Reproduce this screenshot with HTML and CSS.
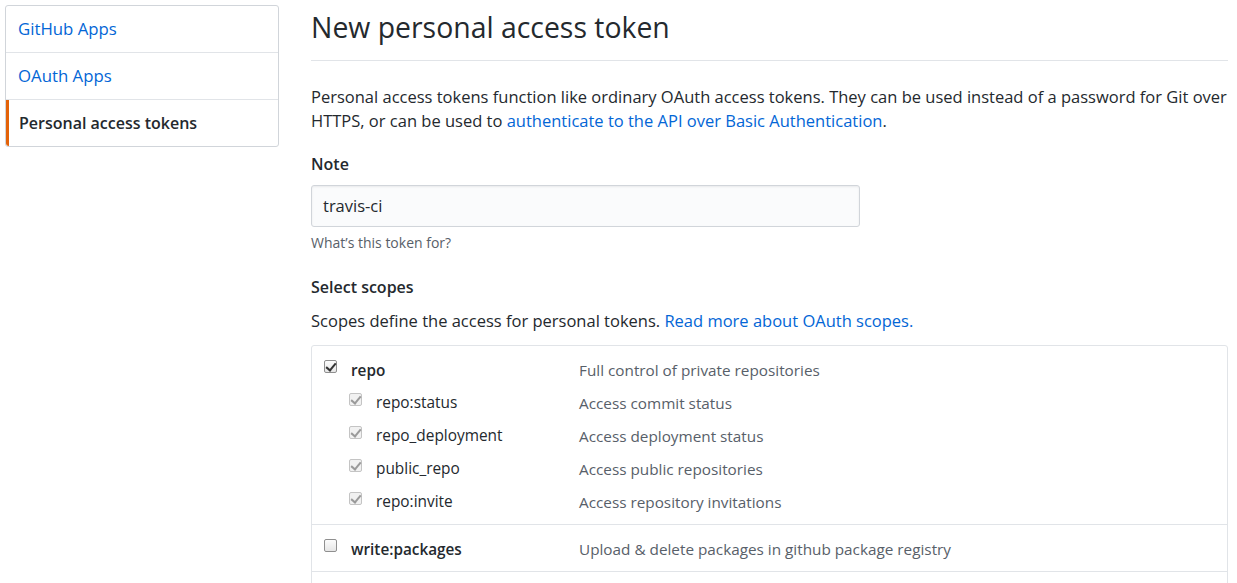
FILE: index.html
```html
<!DOCTYPE html>
<html>
<head>
<meta charset="utf-8">
<link rel="stylesheet" href="styles.css">
</head>
<body>
<div class="page">
  <nav class="menu">
    <a class="menu-item" href="#">GitHub Apps</a>
    <a class="menu-item" href="#">OAuth Apps</a>
    <a class="menu-item selected" href="#">Personal access tokens</a>
  </nav>
  <main class="content">
    <h2 class="title">New personal access token</h2>
    <p class="intro">Personal access tokens function like ordinary OAuth access tokens. They can be used instead of a password for Git over HTTPS, or can be used to <a href="#">authenticate to the API over Basic Authentication</a>.</p>
    <dl class="form-group">
      <dt><label class="label">Note</label></dt>
      <dd><div class="input">travis-ci</div></dd>
      <dd class="note">What’s this token for?</dd>
    </dl>
    <dl class="form-group scopes-group">
      <dt><label class="label">Select scopes</label></dt>
      <dd class="scopes-desc">Scopes define the access for personal tokens. <a href="#">Read more about OAuth scopes.</a></dd>
    </dl>
    <div class="scopes">
      <div class="scope-block">
        <div class="scope-row parent">
          <span class="cell name"><span class="cb checked"></span><span class="scope-name">repo</span></span>
          <span class="desc">Full control of private repositories</span>
        </div>
        <div class="scope-row child">
          <span class="cell name"><span class="cb checked disabled"></span><span class="sub-name">repo:status</span></span>
          <span class="desc">Access commit status</span>
        </div>
        <div class="scope-row child">
          <span class="cell name"><span class="cb checked disabled"></span><span class="sub-name">repo_deployment</span></span>
          <span class="desc">Access deployment status</span>
        </div>
        <div class="scope-row child">
          <span class="cell name"><span class="cb checked disabled"></span><span class="sub-name">public_repo</span></span>
          <span class="desc">Access public repositories</span>
        </div>
        <div class="scope-row child">
          <span class="cell name"><span class="cb checked disabled"></span><span class="sub-name">repo:invite</span></span>
          <span class="desc">Access repository invitations</span>
        </div>
      </div>
      <div class="scope-block">
        <div class="scope-row parent">
          <span class="cell name"><span class="cb"></span><span class="scope-name">write:packages</span></span>
          <span class="desc">Upload &amp; delete packages in github package registry</span>
        </div>
      </div>
      <div class="scope-block">
        <div class="scope-row parent">
          <span class="cell name"><span class="cb"></span><span class="scope-name">read:packages</span></span>
          <span class="desc">Download packages from github package registry</span>
        </div>
      </div>
    </div>
  </main>
</div>
</body>
</html>
```

FILE: styles.css
```css
* { box-sizing: border-box; }
html, body { margin: 0; padding: 0; background: #fff; }
body {
  font-family: "Open Sans", "Noto Sans", "Liberation Sans", sans-serif;
  color: #24292e;
  font-size: 16.5px;
  overflow: hidden;
  height: 583px;
}
a { color: #0366d6; text-decoration: none; }
.page {
  display: flex;
  align-items: flex-start;
  padding: 5px 9px 0 5px;
  gap: 32px;
}
.menu {
  width: 274px;
  flex: none;
  display: flex;
  flex-direction: column;
  border: 1px solid #d1d5da;
  border-radius: 3px;
}
.menu-item {
  display: block;
  height: 47px;
  line-height: 46px;
  padding-left: 12px;
  border-bottom: 1px solid #e1e4e8;
  font-size: 16.8px;
  color: #0366d6;
}
.menu-item:last-child { border-bottom: none; height: 46px; }
.menu-item.selected {
  color: #24292e;
  font-weight: 600;
  font-size: 16px;
  border-left: 3px solid #e36209;
  padding-left: 10px;
  border-radius: 0 0 0 3px;
}
.content { flex: 1; min-width: 0; }
.title {
  margin: 0;
  font-size: 28.4px;
  font-weight: 400;
  line-height: 42px;
  padding-top: 1px;
  padding-bottom: 12px;
  border-bottom: 1px solid #e1e4e8;
}
.intro {
  margin: 24px 0 0;
  line-height: 24px;
  font-size: 16.5px;
}
.form-group { margin: 19px 0 0; }
.form-group dt { margin: 0 0 9px; }
.form-group dd { margin: 0; }
.label { font-weight: 600; font-size: 16px; line-height: 24px; display: block; }
.input {
  width: 549px;
  height: 42px;
  padding: 0 11px;
  line-height: 40px;
  font-size: 16.5px;
  background: #fafbfc;
  border: 1px solid #d1d5da;
  border-radius: 3px;
  box-shadow: inset 0 1px 2px rgba(27,31,35,0.075);
}
.note { font-size: 14px; color: #586069; margin-top: 6px !important; line-height: 20px; }
.scopes-group { margin-top: 22px; }
.scopes-group dt { margin-bottom: 10px; }
.scopes-desc { font-size: 16.5px; line-height: 24px; }
.scopes {
  margin-top: 12px;
  border: 1px solid #e1e4e8;
  border-radius: 3px;
}
.scope-block {
  padding: 7px 12px 6px;
  border-bottom: 1px solid #e1e4e8;
}
.scope-row {
  display: flex;
  align-items: center;
  height: 33px;
}
.cell.name { width: 255px; flex: none; display: flex; align-items: center; }
.child .cell.name { padding-left: 25px; }
.cb {
  width: 13px; height: 13px;
  border: 1px solid #8f8f8f;
  border-radius: 2px;
  background: linear-gradient(#fcfcfc, #e6e6e6);
  margin-right: 14px;
  flex: none;
  position: relative;
  top: -3px;
}
.child .cb { border-color: #c4c4c4; background: #f1f1f1; }
.cb.checked::after {
  content: "";
  position: absolute;
  left: 3px; top: 0px;
  width: 4px; height: 8px;
  border: solid #333;
  border-width: 0 2px 2px 0;
  transform: rotate(40deg);
}
.cb.disabled::after { border-color: #9a9a9a; }
.scope-name { font-weight: 600; font-size: 15.3px; }
.sub-name { font-size: 15.4px; color: #24292e; }
.desc { font-size: 15.3px; color: #586069; }
```
